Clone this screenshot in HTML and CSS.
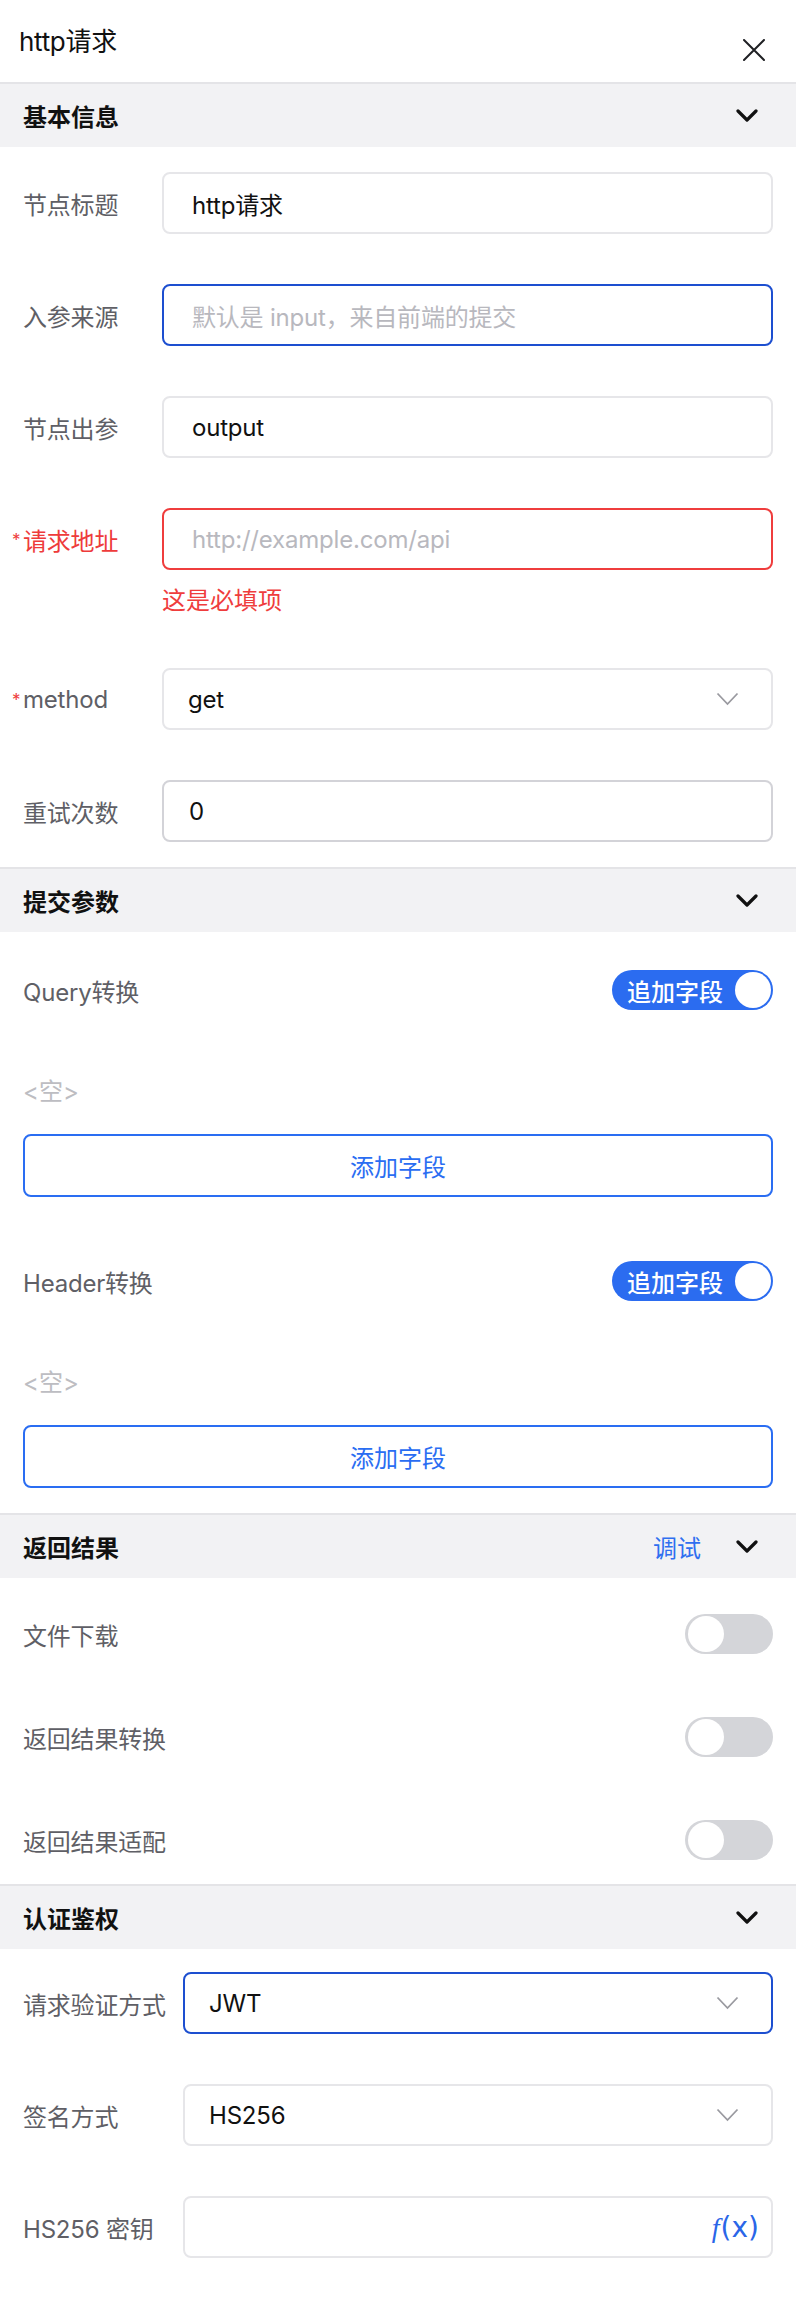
FILE: index.html
```html
<!DOCTYPE html>
<html lang="zh">
<head>
<meta charset="utf-8">
<link rel="stylesheet" href="styles.css">
</head>
<body>
<div class="panel">
  <div class="topbar">
    <div class="title">http请求</div>
    <svg class="close" width="22" height="22" viewBox="0 0 22 22"><path d="M1 1 L21 21 M21 1 L1 21" stroke="#1f2024" stroke-width="2" fill="none" stroke-linecap="round"/></svg>
  </div>

  <div class="sec-head">
    <span class="sec-title">基本信息</span>
    <span class="sec-right"><svg class="chev-b" width="22" height="13" viewBox="0 0 22 13"><path d="M2 2 L11 11 L20 2" stroke="#111" stroke-width="3.2" fill="none" stroke-linecap="round" stroke-linejoin="round"/></svg></span>
  </div>
  <div class="sec-body form">
    <div class="item">
      <label class="lbl">节点标题</label>
      <div class="input"><span class="val">http请求</span></div>
    </div>
    <div class="item">
      <label class="lbl">入参来源</label>
      <div class="input focus"><span class="ph">默认是 input，来自前端的提交</span></div>
    </div>
    <div class="item">
      <label class="lbl">节点出参</label>
      <div class="input"><span class="val">output</span></div>
    </div>
    <div class="item has-err">
      <label class="lbl req err">请求地址</label>
      <div class="field">
        <div class="input error"><span class="ph">http://example.com/api</span></div>
        <div class="err-msg">这是必填项</div>
      </div>
    </div>
    <div class="item">
      <label class="lbl req">method</label>
      <div class="input select"><span class="val">get</span><svg class="chev" width="23" height="14" viewBox="0 0 23 14"><path d="M1.5 1.5 L11.5 12 L21.5 1.5" stroke="#9a9aa0" stroke-width="1.8" fill="none"/></svg></div>
    </div>
    <div class="item">
      <label class="lbl">重试次数</label>
      <div class="input dark"><span class="val">0</span></div>
    </div>
  </div>

  <div class="sec-head">
    <span class="sec-title">提交参数</span>
    <span class="sec-right"><svg class="chev-b" width="22" height="13" viewBox="0 0 22 13"><path d="M2 2 L11 11 L20 2" stroke="#111" stroke-width="3.2" fill="none" stroke-linecap="round" stroke-linejoin="round"/></svg></span>
  </div>
  <div class="sec-body params">
    <div class="block">
      <div class="row">
        <span class="lbl">Query转换</span>
        <span class="toggle on"><span class="t-text">追加字段</span><span class="knob"></span></span>
      </div>
      <div class="empty">&lt;空&gt;</div>
      <div class="add-btn">添加字段</div>
    </div>
    <div class="block">
      <div class="row">
        <span class="lbl">Header转换</span>
        <span class="toggle on"><span class="t-text">追加字段</span><span class="knob"></span></span>
      </div>
      <div class="empty">&lt;空&gt;</div>
      <div class="add-btn">添加字段</div>
    </div>
  </div>

  <div class="sec-head">
    <span class="sec-title">返回结果</span>
    <span class="sec-right"><span class="debug">调试</span><svg class="chev-b" width="22" height="13" viewBox="0 0 22 13"><path d="M2 2 L11 11 L20 2" stroke="#111" stroke-width="3.2" fill="none" stroke-linecap="round" stroke-linejoin="round"/></svg></span>
  </div>
  <div class="sec-body switches">
    <div class="row">
      <span class="lbl">文件下载</span>
      <span class="toggle off"><span class="knob"></span></span>
    </div>
    <div class="row">
      <span class="lbl">返回结果转换</span>
      <span class="toggle off"><span class="knob"></span></span>
    </div>
    <div class="row">
      <span class="lbl">返回结果适配</span>
      <span class="toggle off"><span class="knob"></span></span>
    </div>
  </div>

  <div class="sec-head">
    <span class="sec-title">认证鉴权</span>
    <span class="sec-right"><svg class="chev-b" width="22" height="13" viewBox="0 0 22 13"><path d="M2 2 L11 11 L20 2" stroke="#111" stroke-width="3.2" fill="none" stroke-linecap="round" stroke-linejoin="round"/></svg></span>
  </div>
  <div class="sec-body form wide">
    <div class="item">
      <label class="lbl">请求验证方式</label>
      <div class="input select focus"><span class="val">JWT</span><svg class="chev" width="23" height="14" viewBox="0 0 23 14"><path d="M1.5 1.5 L11.5 12 L21.5 1.5" stroke="#9a9aa0" stroke-width="1.8" fill="none"/></svg></div>
    </div>
    <div class="item">
      <label class="lbl">签名方式</label>
      <div class="input select"><span class="val">HS256</span><svg class="chev" width="23" height="14" viewBox="0 0 23 14"><path d="M1.5 1.5 L11.5 12 L21.5 1.5" stroke="#9a9aa0" stroke-width="1.8" fill="none"/></svg></div>
    </div>
    <div class="item">
      <label class="lbl">HS256 密钥</label>
      <div class="input fx-input"><span class="fx"><i>f</i>(x)</span></div>
    </div>
  </div>
</div>
</body>
</html>
```

FILE: styles.css
```css
* { box-sizing: border-box; }
html, body { margin: 0; padding: 0; background: #fff; }
body {
  font-family: Inter, "Noto Sans CJK SC", sans-serif;
  font-size: 24px;
  color: #111;
  width: 796px;
}
.panel { width: 796px; }

.topbar {
  height: 82px;
  display: flex;
  justify-content: space-between;
  align-items: flex-start;
  padding: 0 31px 0 19px;
}
.title {
  font-size: 26px;
  line-height: 30px;
  margin-top: 27px;
  color: #111;
  font-weight: 400;
  letter-spacing: -0.3px;
}
.close { margin-top: 39px; }

.sec-head {
  height: 65px;
  border-top: 2px solid #e4e4e7;
  background: #f2f2f4;
  display: flex;
  align-items: center;
  justify-content: space-between;
  padding: 0 38px 0 23px;
}
.sec-title { font-weight: bold; font-size: 24px; color: #111; }
.sec-right { display: flex; align-items: center; }
.chev-b { display: block; }
.debug { color: #2f6ff0; font-size: 24px; margin-right: 35px; }

.sec-body { padding: 25px 23px; }
.form { display: flex; flex-direction: column; gap: 50px; }
.item { display: flex; align-items: center; }
.item.has-err { align-items: flex-start; }
.item.has-err .lbl { height: 62px; display: flex; align-items: center; }
.lbl {
  color: #5f5f66;
  font-size: 24px;
  width: 139px;
  flex: none;
  position: relative;
  letter-spacing: -0.2px;
}
.wide .lbl { width: 160px; }
.lbl.req::before {
  content: "*";
  color: #ee3b3b;
  font-size: 17px;
  position: absolute;
  left: -11px;
  top: 50%;
  transform: translateY(-45%);
}
.lbl.err { color: #ee3b3b; }
.field { flex: 1; display: flex; flex-direction: column; }
.input {
  flex: 1;
  height: 62px;
  border: 2px solid #e6e6e9;
  border-radius: 8px;
  display: flex;
  align-items: center;
  padding: 0 28px;
  background: #fff;
}
.field .input { flex: none; }
.input.dark { border-color: #d3d3d8; padding-left: 25px; }
.input.focus { border-color: #1d4fd0; }
.input.error { border-color: #ef3d3d; }
.input.select { padding: 0 32px 0 24px; justify-content: space-between; }
.val { color: #111; font-size: 24px; letter-spacing: -0.2px; }
.ph { color: #b8b8be; font-size: 24px; letter-spacing: -0.2px; }
.chev { display: block; }
.err-msg {
  color: #ef3d3d;
  font-size: 24px;
  line-height: 35px;
  margin-top: 13px;
}
.fx-input { justify-content: flex-end; padding-right: 12px; }
.fx { color: #2a66e8; font-size: 28px; font-family: "DejaVu Sans", sans-serif; }
.fx i { font-style: italic; font-family: "Liberation Serif", serif; margin-right: 1px; }

.params { padding: 38px 23px 25px; display: flex; flex-direction: column; gap: 64px; }
.row {
  display: flex;
  justify-content: space-between;
  align-items: center;
  height: 40px;
}
.row .lbl { width: auto; }
.empty {
  margin-top: 65px;
  line-height: 34px;
  color: #bdbdc2;
  font-size: 24px;
}
.add-btn {
  margin-top: 25px;
  height: 63px;
  border: 2px solid #2a6df2;
  border-radius: 8px;
  display: flex;
  align-items: center;
  justify-content: center;
  color: #2a6df2;
  font-size: 24px;
}

.toggle {
  display: flex;
  align-items: center;
  height: 40px;
  border-radius: 20px;
  padding: 0 2px;
}
.toggle.on {
  width: 161px;
  background: #2b6cf0;
  justify-content: space-between;
  padding-left: 15px;
}
.t-text { color: #fff; font-size: 24px; font-weight: 500; }
.toggle.off { width: 88px; background: #d4d5d9; padding-left: 3px; }
.knob {
  width: 36px;
  height: 36px;
  border-radius: 50%;
  background: #fff;
  display: block;
}

.switches { padding: 36px 23px 24px; display: flex; flex-direction: column; gap: 63px; }
.wide { padding-top: 23px; }
```
